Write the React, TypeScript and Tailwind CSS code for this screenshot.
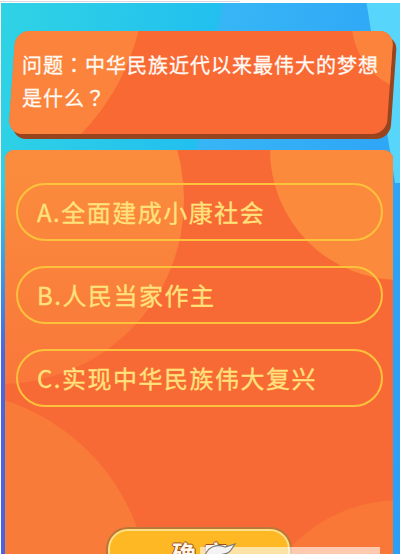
export default function App() {
  const options = ["A.全面建成小康社会", "B.人民当家作主", "C.实现中华民族伟大复兴"];
  const punct = { fontFamily: '"Noto Sans CJK TC", "Noto Sans CJK JP", sans-serif' };

  return (
    <div
      className="relative w-[402px] h-[554px] overflow-hidden bg-white"
      style={{ fontFamily: '"Noto Sans CJK SC", "Noto Sans", sans-serif' }}
    >
      {/* 顶部细线 */}
      <div className="mt-px h-px w-[240px] bg-[#d8d8d8]" />

      {/* 蓝色背景 */}
      <div className="relative ml-px mt-px w-[399px] h-[560px] overflow-hidden bg-[linear-gradient(100deg,#2fd3e4_0%,#22c0ef_44%,#37b6f6_45%,#2b9ef6_100%)]">
        <div className="absolute -top-[10px] right-[-44px] w-[64px] h-[190px] skew-x-[9deg] bg-[#58d5fb]" />
        <div className="absolute left-0 top-[180px] w-[40px] h-[380px] bg-[linear-gradient(180deg,rgba(75,102,223,0)_0%,#4b66df_45%,#4a62de_100%)]" />

        {/* 问题卡片 */}
        <div className="relative ml-[11px] mt-[28px] w-[378px] h-[103px]">
          <div className="absolute inset-0 skew-x-[-4deg] rounded-[14px] bg-[#f86934] shadow-[4px_5px_0_#98441f] overflow-hidden">
            <div className="absolute left-[-290px] top-[-244px] w-[416px] h-[416px] rounded-full bg-[#fb833b]" />
            <div className="absolute left-[335px] top-[-94px] w-[156px] h-[156px] rounded-full bg-[#fb833b]" />
          </div>
          <p className="relative pl-[10px] pt-[17px] text-[20px] leading-[33px] tracking-[1px] text-[#fffaf4] [-webkit-text-stroke:0.3px_#fffaf4]">
            问题<span style={punct}>：</span>中华民族近代以来最伟大的梦想
            <br />
            是什么<span style={punct}>？</span>
          </p>
        </div>

        {/* 选项面板 */}
        <div className="relative ml-[4px] mt-[16px] w-[388px] h-[430px] rounded-[9px] bg-[#f86a35] overflow-hidden">
          <div className="absolute left-[-189px] top-[-134px] w-[368px] h-[368px] rounded-full bg-[linear-gradient(180deg,#fb8c3d_40%,#f9773a_100%)]" />
          <div className="absolute left-[265px] top-[-130px] w-[260px] h-[260px] rounded-full bg-[#fb8a3c]" />
          <div className="absolute left-[-275px] top-[240px] w-[420px] h-[420px] rounded-full bg-[#f97b39]" />
          <div className="absolute left-[245px] top-[350px] w-[300px] h-[300px] rounded-full bg-[#f97838]" />

          <div className="relative flex flex-col gap-[25px] pl-[11px] pr-[10px] pt-[33px]">
            {options.map((opt) => (
              <div
                key={opt}
                className="flex items-center h-[58px] rounded-full border-2 border-[#fdc23c] pl-[19px] text-[24px] tracking-[1.5px] text-[#ffe27c] [-webkit-text-stroke:0.3px_#ffe27c]"
              >
                {opt}
              </div>
            ))}
          </div>

          {/* 确定按钮 */}
          <div className="relative mx-auto mt-[120px] w-[186px] h-[60px] rounded-t-[22px] border-2 border-[#b9793a] bg-[#fdb824] shadow-[inset_0_0_0_2px_#ffdf8a] pt-[6px] pl-[10px] text-center">
            <span className="text-[24px] font-bold tracking-[8px] text-[#fff6ea] [text-shadow:1px_0_#9c4f1d,-1px_0_#9c4f1d,0_1px_#9c4f1d,0_-1px_#9c4f1d]">
              确定
            </span>
          </div>
        </div>
      </div>

      {/* 底部水印条 */}
      <div className="absolute left-[200px] top-[547px] w-[180px] h-[8px] bg-white/60" />
      <svg className="absolute left-[203px] top-[542px]" width="36" height="14" viewBox="0 0 36 14">
        <path d="M2 13 C6 4 14 2 22 5 L32 2 L28 8 C26 12 16 14 2 13 Z" fill="#f3f3f3" stroke="#7a7a7a" strokeWidth="1.2" />
      </svg>
    </div>
  );
}
